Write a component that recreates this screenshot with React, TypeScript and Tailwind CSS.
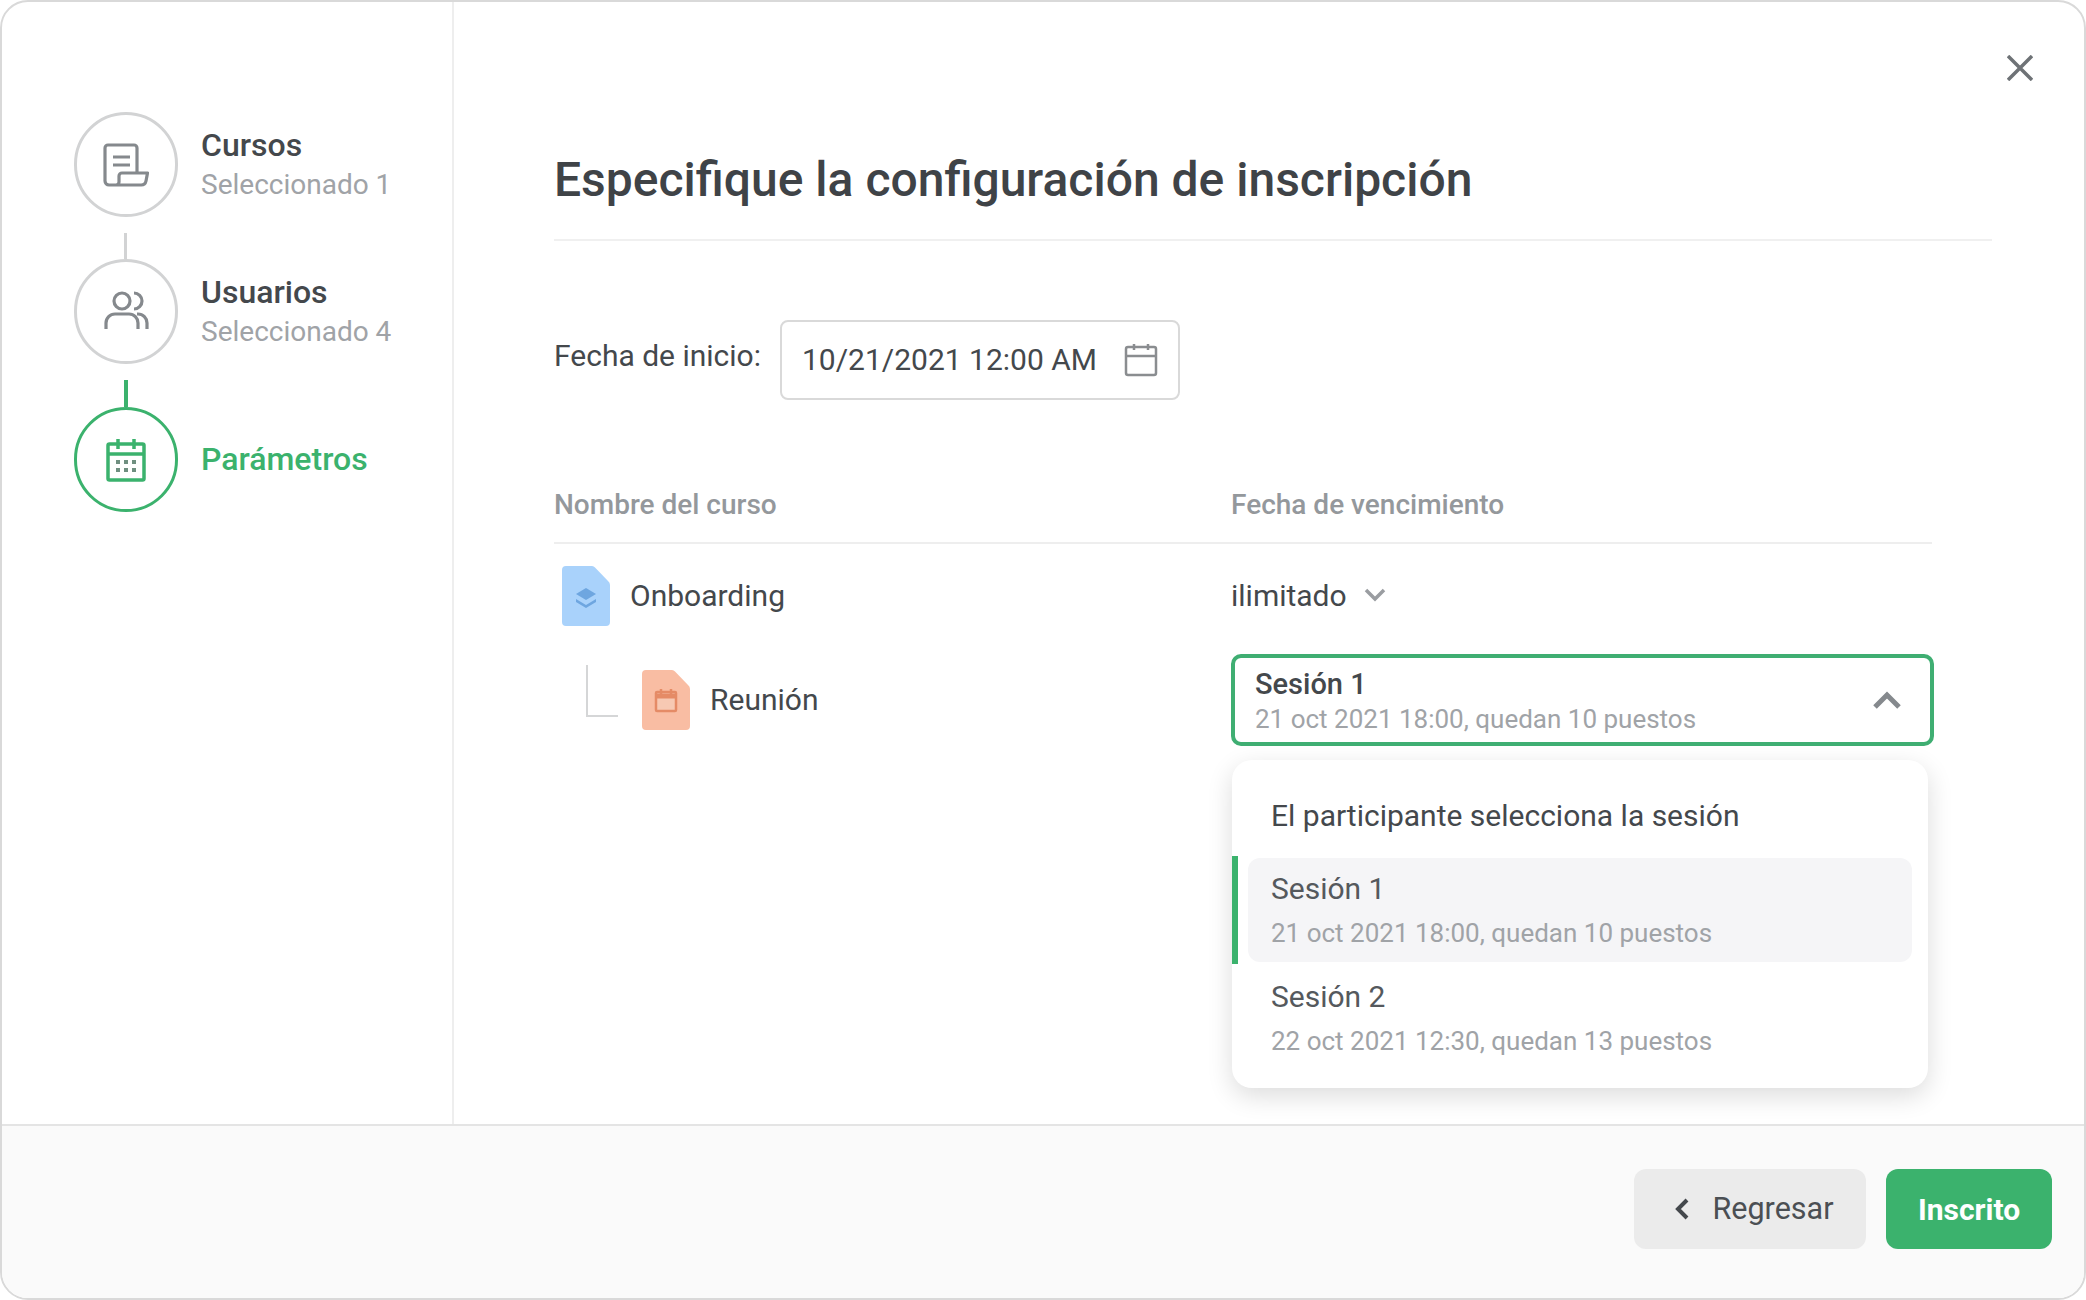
const GREEN = "#3bb26d";

function CourseIcon() {
  return (
    <svg width="46" height="44" viewBox="0 0 46 44" fill="none" stroke="#85898d" strokeWidth="3.2" strokeLinejoin="round" strokeLinecap="round">
      <path d="M34 30V5a3 3 0 0 0-3-3H5a3 3 0 0 0-3 3v33a4 4 0 0 0 4 4h32a5 5 0 0 0 5-4l1.500-8H19a3 3 0 0 0-3 3v6a3 3 0 0 1-3 3" />
      <path d="M10 14h17M10 22h17" strokeLinecap="butt" />
    </svg>
  );
}

function UsersIcon() {
  return (
    <svg width="46" height="42" viewBox="0 0 46 42" fill="none" stroke="#85898d" strokeWidth="3.2" strokeLinecap="butt">
      <circle cx="19" cy="10" r="8" />
      <path d="M31 2a8 8 0 0 1 0 16" />
      <path d="M3 38v-6a9 9 0 0 1 9-9h14a9 9 0 0 1 9 9v6" />
      <path d="M34 23h1a9 9 0 0 1 9 9v6" />
    </svg>
  );
}

function CalendarIcon() {
  return (
    <svg width="40" height="44" viewBox="0 0 40 44" fill="none">
      <rect x="2" y="6" width="36" height="36" rx="1.500" stroke={GREEN} strokeWidth="3.500" />
      <path d="M2 16h36" stroke={GREEN} strokeWidth="3.500" />
      <path d="M12 1v10M28 1v10" stroke={GREEN} strokeWidth="3.500" />
      <g fill="#6f8f80">
        <rect x="10" y="22" width="4" height="4" />
        <rect x="18" y="22" width="4" height="4" />
        <rect x="26" y="22" width="4" height="4" />
        <rect x="10" y="30" width="4" height="4" />
        <rect x="18" y="30" width="4" height="4" />
        <rect x="26" y="30" width="4" height="4" />
      </g>
    </svg>
  );
}

function Step({ icon, title, sub, active }: { icon: React.ReactNode; title: string; sub?: string; active?: boolean }) {
  return (
    <div className="flex items-center gap-[23px]">
      <div className={`w-[104px] h-[105px] rounded-full border-[3px] flex items-center justify-center ${active ? "border-[#3bb26d]" : "border-[#d2d3d4]"}`}>
        {icon}
      </div>
      <div className={active ? "pb-[2px]" : ""}>
        <div className={`text-[32px] leading-[40px] font-medium ${active ? "text-[#3bb26d]" : "text-[#44484c]"}`}>{title}</div>
        {sub && <div className="text-[28px] leading-[38px] mt-[1px] text-[#a0a3a7]">{sub}</div>}
      </div>
    </div>
  );
}

function FileBadge({ color, children }: { color: string; children: React.ReactNode }) {
  return (
    <svg width="48" height="60" viewBox="0 0 48 60">
      <path d="M4 0h26a4 4 0 0 1 3 1.500L46 15a5 5 0 0 1 2 4v37a4 4 0 0 1-4 4H4a4 4 0 0 1-4-4V4a4 4 0 0 1 4-4z" fill={color} />
      {children}
    </svg>
  );
}

export default function App() {
  return (
    <div className="relative w-[2086px] h-[1300px] flex flex-col bg-white border-2 border-[#d9d9d9] rounded-[28px] overflow-hidden font-['Roboto',sans-serif]">
      <button className="absolute top-[53px] right-[51px] text-[#6e7276]">
        <svg width="26" height="26" viewBox="0 0 26 26" stroke="currentColor" strokeWidth="3.500">
          <path d="M1 1l24 24M25 1L1 25" />
        </svg>
      </button>

      <div className="flex flex-1 min-h-0">
        <aside className="w-[452px] shrink-0 border-r-2 border-[#eeeeee] pl-[72px] pt-[110px]">
          <Step icon={<CourseIcon />} title="Cursos" sub="Seleccionado 1" />
          <div className="ml-[50px] mt-[16px] w-[3px] h-[26px] bg-[#d2d3d4]" />
          <Step icon={<UsersIcon />} title="Usuarios" sub="Seleccionado 4" />
          <div className="ml-[50px] mt-[16px] w-[4px] h-[27px] bg-[#3bb26d]" />
          <Step icon={<CalendarIcon />} title="Parámetros" active />
        </aside>

        <main className="flex-1 pl-[100px] pr-[92px] pt-[144px]">
          <div className="border-b-2 border-[#f0f0f0] pb-[25px]">
            <h1 className="text-[48px] leading-[68px] font-medium text-[#3f4347]">Especifique la configuración de inscripción</h1>
          </div>

          <div className="flex items-start gap-[19px] mt-[79px]">
            <label className="text-[30px] leading-[40px] mt-[16px] text-[#44484c]">Fecha de inicio:</label>
            <div className="w-[400px] h-[80px] border-2 border-[#d9d9d9] rounded-[8px] flex items-center justify-between pl-[20px] pr-[20px]">
              <span className="text-[30px] pb-[2px] text-[#44484c]">10/21/2021 12:00 AM</span>
              <svg width="34" height="34" viewBox="0 0 34 34" fill="none" stroke="#8a8d90" strokeWidth="2.500">
                <rect x="2" y="4" width="30" height="28" rx="2" />
                <path d="M2 13h30M10 1v6M24 1v6" />
              </svg>
            </div>
          </div>

          <div className="relative w-[1378px] mt-[85px]">
            <div className="grid grid-cols-[677px_1fr] border-b-2 border-[#eeeeee] pb-[17px] text-[28px] leading-[40px] font-medium text-[#94989c]">
              <div>Nombre del curso</div>
              <div>Fecha de vencimiento</div>
            </div>

            <div className="grid grid-cols-[677px_1fr] items-center mt-[19px] h-[64px]">
              <div className="flex items-center gap-[20px] pl-[8px]">
                <div className="pt-[2px] flex">
                  <FileBadge color="#a9d2fb">
                    <path d="M24 22l10 6-10 6-10-6z" fill="#6ea6e0" />
                    <path d="M14 33l10 6 10-6v3l-10 6-10-6z" fill="#6ea6e0" />
                  </FileBadge>
                </div>
                <span className="text-[30px] text-[#44484c]">Onboarding</span>
              </div>
              <div className="flex items-center gap-[17px]">
                <span className="text-[30px] text-[#44484c]">ilimitado</span>
                <svg width="22" height="14" viewBox="0 0 22 14" fill="none" stroke="#9a9da1" strokeWidth="3.500">
                  <path d="M2 2l9 9 9-9" />
                </svg>
              </div>
            </div>

            <div className="grid grid-cols-[677px_1fr] items-center mt-[27px] h-[92px]">
              <div className="relative flex items-center gap-[20px] pl-[88px]">
                <div className="absolute left-[32px] top-[-5px] w-[32px] h-[52px] border-l-2 border-b-2 border-[#d5d6d7]" />
                <FileBadge color="#f9bda3">
                  <rect x="14" y="22" width="20" height="19" rx="1" fill="#f7c9b3" stroke="#e58b66" strokeWidth="2.500" />
                  <path d="M14 26h20" stroke="#e58b66" strokeWidth="5" />
                  <path d="M19 19v5M29 19v5" stroke="#e58b66" strokeWidth="2.500" />
                </FileBadge>
                <span className="text-[30px] pb-[2px] text-[#44484c]">Reunión</span>
              </div>
              <div className="h-[92px] -mr-[2px] border-[4px] border-[#3fae72] rounded-[10px] flex items-center justify-between pl-[20px] pr-[29px]">
                <div className="pt-[2px]">
                  <div className="text-[29px] leading-[36px] font-medium text-[#44484c]">Sesión 1</div>
                  <div className="text-[26px] leading-[34px] text-[#a0a3a7]">21 oct 2021 18:00, quedan 10 puestos</div>
                </div>
                <svg width="28" height="18" viewBox="0 0 28 18" fill="none" stroke="#85898d" strokeWidth="5">
                  <path d="M2 16L14 4l12 12" />
                </svg>
              </div>
            </div>

            <div className="absolute top-[275px] left-[678px] w-[696px] h-[328px] bg-white rounded-[20px] shadow-[0_8px_26px_rgba(0,0,0,0.14)] pt-[26px] px-[16px]">
              <div className="absolute left-0 top-[96px] w-[6px] h-[108px] bg-[#3bb26d]" />
              <div className="pl-[23px] text-[30px] leading-[60px] text-[#44484c]">El participante selecciona la sesión</div>
              <div className="mt-[12px] h-[104px] rounded-[12px] bg-[#f5f5f7] pl-[23px] pt-[11px]">
                <div className="text-[30px] leading-[40px] text-[#55595d]">Sesión 1</div>
                <div className="text-[26px] leading-[34px] mt-[7px] text-[#a0a3a7]">21 oct 2021 18:00, quedan 10 puestos</div>
              </div>
              <div className="h-[104px] pl-[23px] pt-[15px]">
                <div className="text-[30px] leading-[40px] text-[#55595d]">Sesión 2</div>
                <div className="text-[26px] leading-[34px] mt-[7px] text-[#a0a3a7]">22 oct 2021 12:30, quedan 13 puestos</div>
              </div>
            </div>
          </div>
        </main>
      </div>

      <footer className="h-[174px] shrink-0 border-t-2 border-[#e4e4e4] bg-[#fafafa] flex justify-end gap-[20px] pt-[43px] pr-[32px]">
        <button className="w-[232px] h-[80px] pl-[8px] rounded-[12px] bg-[#ebebeb] flex items-center justify-center gap-[24px] text-[30.500px] text-[#4b4f53]">
          <svg width="14" height="22" viewBox="0 0 14 22" fill="none" stroke="#44484c" strokeWidth="4">
            <path d="M12 2L3 11l9 9" />
          </svg>
          Regresar
        </button>
        <button className="w-[166px] h-[80px] rounded-[12px] bg-[#3bb26d] text-[30px] font-bold text-white">Inscrito</button>
      </footer>
    </div>
  );
}
